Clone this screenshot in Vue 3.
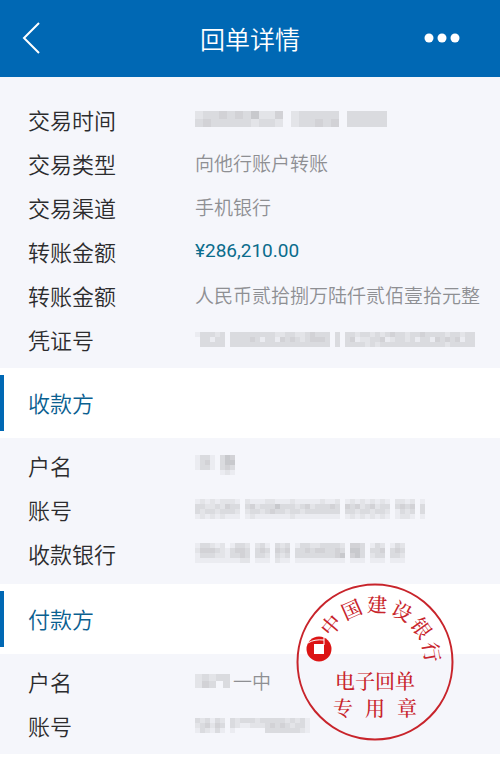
<script setup>
const trade = [
    {
        label: '交易时间',
        cell: 8,
        mask: [
            '23343435224 233333 33333',
            '34333332332 233434 33333'
        ]
    },
    { label: '交易类型', value: '向他行账户转账' },
    { label: '交易渠道', value: '手机银行' },
    { label: '转账金额', value: '¥286,210.00', amount: true },
    { label: '转账金额', value: '人民币贰拾捌万陆仟贰佰壹拾元整' },
    {
        label: '凭证号',
        cell: 5,
        mask: [
            '133323 33333333322332234333 3 33233232343323343333233233',
            ' 33133 33334313314343234443 3 34122334123323133143434133',
            ' 33333 33333333333333333333 3 33332323333333333333233333'
        ]
    }
];
const payee = [
    {
        label: '户名',
        cell: 5,
        mask: ['1331 354', '1341 355', '1331 343', '     121']
    },
    {
        label: '账号',
        cell: 5,
        mask: [
            '121212221 2111221112111112112 121212121 2212 1',
            '332232433 3423335333234233343 434234233 3434 3',
            '323323332 2332343323323333333 332332332 1323 3',
            '121212111 1211111112111111111 121212121 1221 1'
        ]
    },
    {
        label: '收款银行',
        cell: 5,
        mask: [
            '133212 1332 231 323 1332233332 443 132 132',
            '24443213443 343 434 3343443343 553 334 343',
            '13332213343 332 323 3333333345 453 233 332',
            '11111111122 111 211 1111111111 111 111 111'
        ]
    }
];
const payer = [
    {
        label: '户名',
        cell: 7,
        mask: ['23233', '24303'],
        value: '一中'
    },
    {
        label: '账号',
        cell: 5,
        mask: [
            '323132 3233323333323231',
            '234243 3211222343432331',
            '132131 1      333333321'
        ]
    }
];
const sections = [
    { key: 'trade', rows: trade },
    { key: 'payee', title: '收款方', rows: payee },
    { key: 'payer', title: '付款方', rows: payer, seal: true }
];

// bank name spread around the top of the seal
const arc = [...'中国建设银行'].map((char, i) => ({ char, angle: -50 + i * 26 }));

const cellsOf = (row) => row.mask.flatMap((line, y) =>
    [...line].map((level, x) => ({ x, y, level: Number(level) })).filter((c) => c.level > 0)
);
const maskWidth = (row) => Math.max(...row.mask.map((line) => line.length)) * row.cell;
const maskHeight = (row) => row.mask.length * row.cell;
</script>

<template>
    <div class="page">
        <header class="bar">
            <button class="back" type="button" aria-label="返回">
                <svg width="20" height="34" viewBox="0 0 20 34">
                    <path d="M17 2 L2 17 L17 32" />
                </svg>
            </button>
            <h1>回单详情</h1>
            <button class="more" type="button" aria-label="更多">
                <svg width="36" height="10" viewBox="0 0 36 10">
                    <circle cx="5" cy="5" r="4.5" />
                    <circle cx="18" cy="5" r="4.5" />
                    <circle cx="31" cy="5" r="4.5" />
                </svg>
            </button>
        </header>
        <main>
            <section v-for="s in sections" :key="s.key" class="section">
                <h2 v-if="s.title">{{ s.title }}</h2>
                <dl class="rows" :class="s.key">
                    <div v-for="row in s.rows" :key="row.label + row.value" class="row">
                        <dt>{{ row.label }}</dt>
                        <dd :class="{ amount: row.amount }">
                            <svg v-if="row.mask" class="mask" :width="maskWidth(row)" :height="maskHeight(row)"
                                shape-rendering="crispEdges">
                                <rect v-for="c in cellsOf(row)" :key="c.x + '-' + c.y" :x="c.x * row.cell"
                                    :y="c.y * row.cell" :width="row.cell" :height="row.cell"
                                    :fill-opacity="c.level * 0.05" />
                            </svg>
                            <span v-if="row.value">{{ row.value }}</span>
                        </dd>
                    </div>
                </dl>
                <svg v-if="s.seal" class="seal" width="158" height="158" viewBox="-79 -79 158 158">
                    <circle class="ring" r="77.5" />
                    <text v-for="a in arc" :key="a.char" y="-50" :transform="`rotate(${a.angle})`">{{ a.char }}</text>
                    <circle class="coin" cx="-56" cy="-13" r="12.5" />
                    <path class="cut" d="M-61 -18h10v10h-10z" />
                    <path class="slit" d="M-67 -19 Q-61 -23 -51 -22 M-51 -26 V-17" />
                    <text class="wide" y="27">电子回单</text>
                    <text x="-32" y="54">专</text>
                    <text x="0" y="54">用</text>
                    <text x="32" y="54">章</text>
                </svg>
            </section>
        </main>
    </div>
</template>

<style>
body {
    margin: 0;
    background: #fff;
}
</style>

<style scoped>
.page {
    font-family: "Noto Sans CJK SC", sans-serif;
    font-weight: 350;
    color: #2c2c2e;
}

.bar {
    display: grid;
    grid-template-columns: 1fr auto 1fr;
    align-items: center;
    height: 77px;
    padding: 0 40px 2px 22px;
    box-sizing: border-box;
    background: #0068b4;
    color: #fff;
}

.bar h1 {
    margin: 0 0 0 18px;
    font-size: 25px;
    line-height: 36px;
    font-weight: 350;
}

button {
    display: flex;
    padding: 0;
    border: 0;
    background: none;
    cursor: pointer;
}

.more {
    justify-self: end;
}

.back path {
    fill: none;
    stroke: #fff;
    stroke-width: 2;
}

.more circle {
    fill: #fff;
}

.section {
    position: relative;
}

h2 {
    margin: 0;
    padding: 7px 0;
    font-size: 22px;
    line-height: 54px;
    height: 56px;
    font-weight: 350;
    color: #0a6090;
    display: flex;
}

h2::before {
    content: "";
    width: 4px;
    margin-right: 24px;
    background: #0068b4;
}

.rows {
    margin: 0;
    padding: 5px 0 9px;
    background: #f5f6fb;
}

.rows.trade {
    padding: 20px 0 7px;
}

.rows.payer {
    padding-bottom: 7px;
}

.row {
    display: flex;
    align-items: center;
    height: 44px;
    padding-left: 28px;
}

dt {
    flex: 0 0 167px;
    font-size: 22px;
    line-height: 32px;
}

dd {
    display: flex;
    align-items: center;
    margin: 0;
    font-size: 19px;
    line-height: 28px;
    color: #8e8f93;
    white-space: nowrap;
}

.amount {
    font-family: Roboto, sans-serif;
    font-weight: 400;
    color: #0a6c8c;
}

.mask {
    fill: #444;
    margin-right: 3px;
}

.seal {
    position: absolute;
    right: 46px;
    bottom: 13px;
    fill: #c8242b;
    font-family: "Noto Serif CJK SC", "Noto Sans CJK SC", serif;
    font-size: 20px;
    font-weight: 500;
    text-anchor: middle;
}

.ring {
    fill: none;
    stroke: #c8242b;
    stroke-width: 2;
}

.coin {
    fill: #dc1414;
}

.cut {
    fill: #fff;
}

.slit {
    fill: none;
    stroke: #fff;
    stroke-width: 1;
}
</style>
